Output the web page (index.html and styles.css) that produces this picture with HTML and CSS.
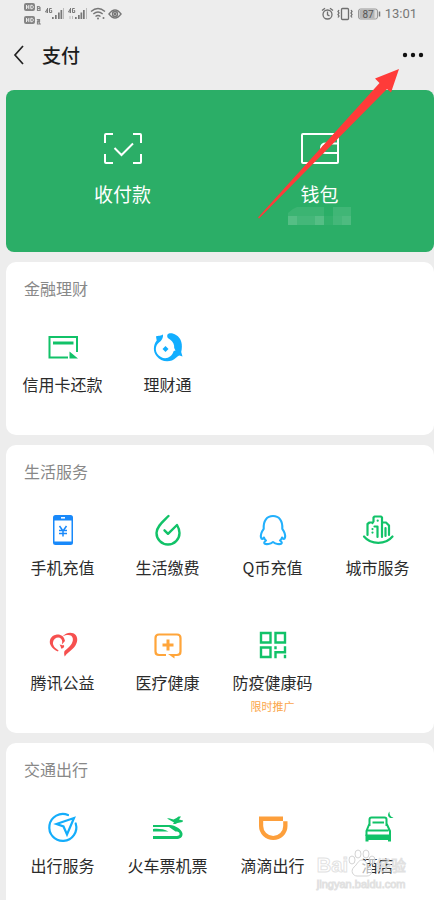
FILE: index.html
```html
<!DOCTYPE html>
<html lang="zh-CN">
<head>
<meta charset="utf-8">
<meta name="viewport" content="width=device-width, initial-scale=1">
<title>支付</title>
<link rel="stylesheet" href="styles.css">
</head>
<body>
<div class="page">
  <div class="status">
    <svg class="status-left" width="102" height="28" viewBox="0 0 102 28" aria-hidden="true">
      <g fill="#858585">
        <rect x="0" y="3" width="11" height="8" rx="2"/>
        <rect x="0" y="16" width="11" height="8" rx="2"/>
      </g>
      <g fill="none" stroke="#ececec" stroke-width="1">
        <path d="M2.500 5v4M4.800 5v4M2.500 7h2.300M6.800 5.300v3.400h1.400l1-1V6.300l-1-1z"/>
        <path d="M2.500 18v4M4.800 18v4M2.500 20h2.300M6.800 18.300v3.400h1.400l1-1V19.300l-1-1z"/>
      </g>
      <g fill="none" stroke="#858585" stroke-width="1.200">
        <path d="M13.500 6.500h1.500l1 1v3h-2.500zM13.500 8.500h2"/>
        <path d="M13.500 19.500h2v2h-2v2.500h2.500z"/>
      </g>
      <g fill="none" stroke="#777" stroke-width="1">
        <path d="M23.500 8.500l-2 3.500h2.500M23.500 8v5M27.700 8.500h-2.200v4h2.200v-2h-1"/>
        <path d="M46.500 8.500l-2 3.500h2.500M46.500 8v5M50.700 8.500h-2.200v4h2.200v-2h-1"/>
      </g>
      <g fill="#777">
        <path d="M28 17h1.700v2H28zM31 15h1.700v4H31zM34 12.500h1.700V19H34zM36.500 10h1.700v9h-1.700z"/>
        <path d="M51 17h1.700v2H51zM54 15h1.700v4H54zM56.500 12.500h1.700V19h-1.700zM59 10h1.700v9H59z"/>
      </g>
      <path d="M39.500 8v11M62.500 8v11" stroke="#bbb"/>
      <path d="M46 16v3M48.500 16v3" stroke="#bbb"/>
      <g fill="none" stroke="#777" stroke-width="1.400">
        <path d="M67 11.500q7-6 14 0M69.300 14q4.700-4 9.400 0M71.500 16.500q2.500-2 5 0"/>
        <path d="M85 14q6-8 12 0q-6 8-12 0z"/>
        <circle cx="91" cy="14" r="2.500"/>
      </g>
      <g fill="#777"><circle cx="74" cy="18.500" r="1"/><circle cx="79.500" cy="18" r="1"/><circle cx="91" cy="14" r="1.400"/></g>
    </svg>
    <div class="status-right">
      <svg width="60" height="28" viewBox="0 0 60 28" aria-hidden="true">
        <g fill="none" stroke="#6f6f6f" stroke-width="1.300">
          <circle cx="6.500" cy="14.500" r="4.500"/>
          <path d="M6.500 11.500v3.300l2 1M1 10.500l3-2.300M12 10.500L9 8.200"/>
          <rect x="20.500" y="8.500" width="7" height="11" rx="1"/>
          <path d="M18 10l-1 1.500 1 1.500-1 1.500 1 1.500-1 1.500M30 10l1 1.500-1 1.500 1 1.500-1 1.500 1 1.500"/>
        </g>
        <rect x="37.500" y="9" width="19" height="10" rx="2" fill="#dedede" stroke="#999"/>
        <path d="M38.500 10h15v8h-15z" fill="#b5b5b5"/>
        <path d="M58.500 11.500v5" stroke="#777" stroke-width="1.500"/>
        <text x="47" y="18" class="battery">87</text>
      </svg>
      <span class="clock">13:01</span>
    </div>
  </div>

  <header class="nav">
    <button class="nav-button" aria-label="返回">
      <svg width="14" height="22" viewBox="0 0 14 22"><path d="M11 2L3 11l8 9" fill="none" stroke="#222" stroke-width="1.700"/></svg>
    </button>
    <h1 class="nav-title">支付</h1>
    <button class="nav-button" aria-label="更多">
      <svg width="22" height="8" viewBox="0 0 22 8" fill="#111"><circle cx="3" cy="4" r="2.200"/><circle cx="11" cy="4" r="2.200"/><circle cx="19" cy="4" r="2.200"/></svg>
    </button>
  </header>

  <main class="cards">
    <section class="wallet">
      <a class="wallet-item" href="#">
        <svg width="40" height="40" viewBox="0 0 40 40" fill="none" stroke="#fff" stroke-width="2">
          <path d="M2 14V6q0-1 1-1h7M30 5h7q1 0 1 1v8M38 25v8q0 1-1 1h-7M10 34H3q-1 0-1-1v-8M11.500 19l7 7L30 14.500"/>
        </svg>
        <span class="wallet-label">收付款</span>
      </a>
      <a class="wallet-item" href="#">
        <svg width="40" height="40" viewBox="0 0 40 40" fill="none" stroke="#fff" stroke-width="2">
          <rect x="2" y="5" width="36" height="29" rx="1"/>
          <path d="M38 14.500H26q-5 0-5 4.700t5 4.800h12"/>
        </svg>
        <span class="wallet-label">钱包</span>
        <svg width="63" height="18" viewBox="0 0 63 18" aria-hidden="true" fill="#fff">
          <path d="M0 9V6l5-4 4-2h27v9z" opacity=".08"/><path d="M45 0h18v9H45z" opacity=".1"/>
          <path d="M0 9h9v9H0z" opacity=".2"/><path d="M9 9h18v9H9z" opacity=".12"/><path d="M27 9h9v9h-9z" opacity=".2"/>
          <path d="M36 9h9v9h-9z" opacity=".04"/><path d="M45 9h9v9h-9z" opacity=".12"/><path d="M54 9h9v9h-9z" opacity=".17"/>
        </svg>
      </a>
    </section>

    <section class="card">
      <h2 class="card-title">金融理财</h2>
      <div class="grid">
        <a class="item" href="#">
          <svg class="icon" viewBox="0 0 36 36" fill="none" stroke="#11c268" stroke-width="2">
            <path d="M23 28.500H4.500V8H32v15"/><path d="M8 14h20.500" stroke-width="3"/>
            <path d="M24.500 22.500L33 29.500h-8.500z" fill="#11c268" stroke="none"/>
          </svg>
          <span class="label">信用卡还款</span>
        </a>
        <a class="item" href="#">
          <svg class="icon" viewBox="0 0 36 36" fill="#12aeff">
            <path d="M13 5.200C11 7.500 8.500 6 6 7.500l.7 4C3 16 3 23 6.500 27c4.500 6.500 14.500 7 19.500 1.800 1.300-1.400 2.500-2.100 3.500-2.300l3 1-1.300-4.500C33 16 31.500 9 26 6c-3-2-7-2.300-8.500-.5-1 2 .2 4 2.500 5 3 2 4.500 5 4.200 8.500l1.300 2.500-1.800.5C22 28 16 31 11 28 4.500 24.500 4.500 17 9 13.500c2.700-2 4.500-4.500 4-8.300z"/>
            <path d="M15.500 17l3 3-3 3-3-3z"/>
          </svg>
          <span class="label">理财通</span>
        </a>
      </div>
    </section>

    <section class="card">
      <h2 class="card-title">生活服务</h2>
      <div class="grid">
        <a class="item" href="#">
          <svg class="icon" viewBox="0 0 36 36">
            <rect x="8" y="3" width="20" height="30" rx="2.500" fill="#1989fa"/>
            <path d="M9.500 8.500h17v21h-17z" fill="#fff"/><path d="M16 5.800h4" stroke="#fff" stroke-width="1.500"/>
            <path d="M14.500 14l3.500 5 3.500-5M18 19v5.500M14 18.500h8M14 21.500h8" fill="none" stroke="#1989fa" stroke-width="1.500"/>
          </svg>
          <span class="label">手机充值</span>
        </a>
        <a class="item" href="#">
          <svg class="icon" viewBox="0 0 36 36" fill="none" stroke="#11c268" stroke-width="2.400" stroke-linecap="round" stroke-linejoin="round">
            <path d="M18.500 4C13 9.500 6.500 14.500 6.500 21a11.500 11.500 0 0 0 23 0c0-3-1-5.500-2.500-8L18 21.800l-3.500-3.500"/>
          </svg>
          <span class="label">生活缴费</span>
        </a>
        <a class="item" href="#">
          <svg class="icon" viewBox="0 0 36 36" fill="none" stroke="#22b0fc" stroke-width="2.100" stroke-linejoin="round" stroke-linecap="round">
            <path d="M9 25.500c-1.500 2-2.500 2-3 0-.7-3 .8-6 2.700-8.700C8.200 8.500 12 4 18 4s9.800 4.500 9.300 12.800C29.200 19.500 30.700 22.500 30 25.500c-.5 2-1.500 2-3 0M9 25.500c.4 1.300 1 2.200 2 3-4 3-.5 4 2.500 3.500 2-.2 3.300-1 4.500-2 1.200 1 2.500 1.800 4.500 2 3 .5 6.500-.5 2.500-3.500 1-.8 1.600-1.700 2-3"/>
          </svg>
          <span class="label">Q币充值</span>
        </a>
        <a class="item" href="#">
          <svg class="icon" viewBox="0 0 36 36" fill="none" stroke="#11c268" stroke-width="2.200" stroke-linejoin="round" stroke-linecap="round">
            <path d="M7.500 23V12l2-1.500h3M12.500 11l1-1.500V5.500l1-1h6.500l1 1V25M17.500 25V14.500h-3M22 10.500h4l3 3v9.500M25.500 24v-8M4 24.500c7 8.500 21.500 8.500 28.500 0"/>
            <path d="M17.700 8.500v.2M12.500 17v.1M12.500 20.500v.1"/>
          </svg>
          <span class="label">城市服务</span>
        </a>
        <a class="item" href="#">
          <svg class="icon" viewBox="0 0 36 36" fill="#f6504f">
            <path d="M17.500 9.500c3.300-4.500 10.300-5 13.200-1.500 3 4 1.500 9.500-3 13.800-3 2.700-5.700 4.700-8 7.700-.6-2.200-.8-3.500-.2-5.500 5-4 9-8 8.300-12.500-.6-3.700-5-4.500-10.300-2z"/>
            <path d="M20 14c-1-5-4.500-7-9-6.300-5 .8-7.500 6-5.500 10.300 1.500 3.200 4.500 5.200 7.500 6.500l.5-1.300c-3.500-2-6-5-5.500-8 .6-4 5.500-6.200 8-3.500 1.500 1.700 1.500 3.500.7 6 1.300-1.500 2.200-2.700 3.300-3.700z"/>
            <path d="M14.500 17.500c2 0 3 1.500 4.500.5.800 2.500-1.200 4-3 3.500 0-1.800-.5-2.500-1.500-4z"/>
          </svg>
          <span class="label">腾讯公益</span>
        </a>
        <a class="item" href="#">
          <svg class="icon" viewBox="0 0 36 36" fill="none" stroke="#ffa53a" stroke-width="2.200">
            <path d="M16 28H9q-3.500 0-3.500-3.500V11Q5.500 7.500 9 7.500h18q3.500 0 3.500 3.500v13.500Q30.500 28 27 28h-3"/>
            <path d="M18 27h6.500v4.500z" fill="#ffa53a" stroke="none"/><path d="M18 12.500v11M12.500 18h11" stroke-width="3"/>
          </svg>
          <span class="label">医疗健康</span>
        </a>
        <a class="item" href="#">
          <svg class="icon" viewBox="0 0 36 36" fill="none" stroke="#11c268" stroke-width="2.400">
            <path d="M6 6h9.500v9.500H6zM20.500 6H30v9.500h-9.500zM6 20.500h9.500V30H6z"/>
            <path d="M20.500 19.300v3M20.500 31.200v-6h6.500M30 19.300v5.900h-5M30 27.700v3.500"/>
          </svg>
          <span class="label">防疫健康码</span>
          <span class="promo">限时推广</span>
        </a>
      </div>
    </section>

    <section class="card card-last">
      <h2 class="card-title">交通出行</h2>
      <div class="grid">
        <a class="item" href="#">
          <svg class="icon" viewBox="0 0 36 36" fill="none" stroke="#14adfb" stroke-width="2.200" stroke-linecap="round">
            <path d="M23 5A13.500 13.500 0 1 0 30.700 13.500"/><path d="M29 8l-7 16.500-3.500-8L11.500 14z"/>
          </svg>
          <span class="label">出行服务</span>
        </a>
        <a class="item" href="#">
          <svg class="icon" viewBox="0 0 36 36" fill="#11c268">
            <path d="M3 15h17c5 0 12 4.500 12.500 8.500.3 4-2.500 5.500-6.500 5.500H3v-3h22c3 0 5-.5 4.500-2.500-.3-1.500-1.500-2-4-2L19 17H3z"/>
            <path d="M3 19c5-.5 11 0 15.500 2.500H3z"/>
            <path d="M17 8.500l2-.3 4.500 1.300 3-1.500 2-1.500H31l-2 3 4 1-.5 1.500-5 1-2 1h-2.500l1-1.500z"/>
          </svg>
          <span class="label">火车票机票</span>
        </a>
        <a class="item" href="#">
          <svg class="icon" viewBox="0 0 36 36">
            <path d="M4 6.500h24v4.700h4.500V16a14.250 14 0 0 1-28.500 0zM8.200 11v5a10 10 0 0 0 20 0v-5z" fill="#fd9f3b" fill-rule="evenodd"/>
          </svg>
          <span class="label">滴滴出行</span>
        </a>
        <a class="item" href="#">
          <svg class="icon" viewBox="0 0 36 36" fill="none" stroke="#11c268" stroke-width="2">
            <path d="M9.500 16V9.500q0-2 2-2h13q2 0 2 2V16M9.500 13.500L6.500 21v5M26.500 13.500l3.500 7.500v5M12.500 12.500H24M7.500 20.500h21"/>
            <path d="M5.500 24.500H31v7h-3v-1.500H8.500v1.500h-3z" fill="#11c268" stroke="none"/>
            <path d="M29.500 1.500c-3.500 4 0 8 4 6-2.500-.5-4.200-2-4-6z" fill="#11c268" stroke="none"/>
          </svg>
          <span class="label">酒店</span>
        </a>
      </div>
    </section>
  </main>

  <svg class="arrow" width="142" height="151" viewBox="0 0 142 151" aria-hidden="true">
    <path d="M141 0l-8 23.500-4-3.500L1 149.500l-1-1L121.500 14l-4.500-4.500z" fill="#ff3b39"/>
  </svg>

  <div class="watermark" aria-hidden="true">
    <div class="mark-brand">
      <span>Bai</span>
      <svg width="28" height="28" viewBox="0 0 28 28" fill="#fff" stroke="#d4d4d4" fill-opacity=".65" stroke-width="1">
        <ellipse cx="4" cy="11" rx="3" ry="4"/><ellipse cx="10" cy="5" rx="3" ry="4"/><ellipse cx="18" cy="5" rx="3" ry="4"/><ellipse cx="24" cy="11" rx="3" ry="4"/>
        <path d="M14 11c4 0 5 5 8 7 4 4 1 9-3 9H9c-4 0-7-5-3-9 3-2 4-7 8-7z"/>
      </svg>
      <span class="mark-cn">经验</span>
    </div>
    <div class="mark-url">jingyan.baidu.com</div>
  </div>
</div>
</body>
</html>
```
FILE: styles.css
```css
* {
  box-sizing: border-box;
}

body {
  margin: 0;
  background: #ededed;
  color: #2b2b2b;
  font-family: "Noto Sans CJK SC", "Noto Sans", sans-serif;
}

a {
  color: inherit;
  text-decoration: none;
}

h1,
h2 {
  margin: 0;
}

.page {
  position: relative;
  display: flex;
  flex-direction: column;
  min-height: 100vh;
}

.status {
  display: flex;
  justify-content: space-between;
  height: 28px;
  padding: 0 17px 0 24px;
}

.status-right {
  display: flex;
  align-items: center;
  gap: 4px;
}

.clock {
  color: #777;
  font: 13px/28px Roboto, sans-serif;
}

.battery {
  fill: #555;
  font: 10px Roboto, sans-serif;
  text-anchor: middle;
}

.nav {
  display: flex;
  align-items: center;
  gap: 16px;
  height: 54px;
  margin-bottom: 8px;
  padding: 0 10px 0 12px;
}

.nav-button {
  display: flex;
  padding: 0;
  border: 0;
  background: none;
}

.nav-title {
  flex: 1;
  color: #1c1c1c;
  font-size: 19px;
  font-weight: 500;
  line-height: 28px;
}

.cards {
  display: flex;
  flex: 1;
  flex-direction: column;
  gap: 10px;
  padding-left: 6px;
}

.wallet {
  display: grid;
  grid-template-columns: 1fr 1fr;
  min-height: 162px;
  padding: 39px 16px 0 18px;
  border-radius: 8px;
  background: #2bae67;
  color: #fff;
}

.wallet-item,
.item {
  display: flex;
  flex-direction: column;
  align-items: center;
}

.wallet-label {
  margin-top: 12px;
  font-size: 19px;
  line-height: 26px;
}

.card {
  padding: 15px 4px 0;
  border-radius: 10px;
  background: #fff;
}

.card-last {
  flex: 1;
  border-radius: 10px 10px 0 0;
}

.card-title {
  margin: 0 14px 30px;
  color: #888;
  font-size: 16px;
  font-weight: 400;
  line-height: 22px;
}

.grid {
  display: grid;
  grid-template-columns: repeat(4, 1fr);
  row-gap: 9px;
}

.item {
  min-height: 106px;
}

.card-last .item {
  min-height: 0;
}

.icon {
  width: 36px;
  height: 36px;
}

.label {
  margin-top: 7px;
  font-size: 16px;
  line-height: 24px;
  white-space: nowrap;
}

.promo {
  margin-top: 4px;
  color: #fba64b;
  font-size: 11px;
  line-height: 16px;
}

.arrow {
  position: absolute;
  top: 69px;
  right: 34px;
}

.watermark {
  position: absolute;
  right: 28px;
  bottom: 9px;
  color: rgba(255, 255, 255, 0.7);
  pointer-events: none;
  -webkit-text-stroke: 1px rgba(205, 205, 205, 0.6);
}

.mark-brand {
  display: flex;
  align-items: flex-end;
  height: 30px;
  font: bold 20px/24px "Liberation Sans", sans-serif;
}

.mark-cn {
  font: 15px/24px "Noto Sans CJK SC", sans-serif;
}

.mark-url {
  font: 11px/14px "Liberation Sans", sans-serif;
}
```
